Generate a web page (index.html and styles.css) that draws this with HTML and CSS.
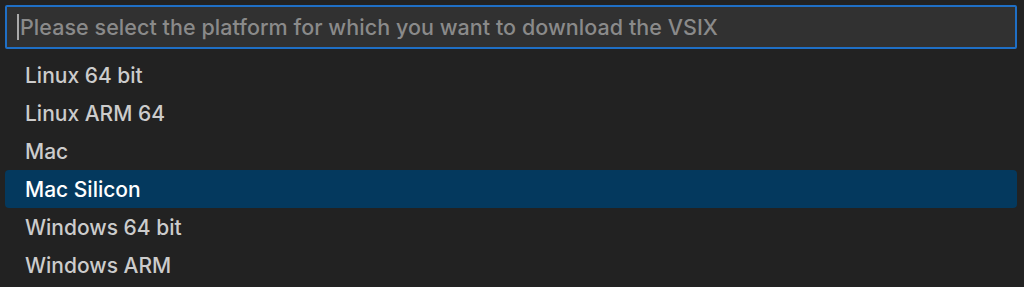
FILE: index.html
```html
<!DOCTYPE html>
<html>
<head>
<meta charset="utf-8">
<link rel="stylesheet" href="styles.css">
</head>
<body>
<div class="quick-pick">
  <div class="input-box">
    <span class="cursor"></span>
    <span class="placeholder">Please select the platform for which you want to download the VSIX</span>
  </div>
  <ul class="list">
    <li class="item">Linux 64 bit</li>
    <li class="item">Linux ARM 64</li>
    <li class="item">Mac</li>
    <li class="item selected">Mac Silicon</li>
    <li class="item">Windows 64 bit</li>
    <li class="item">Windows ARM</li>
  </ul>
</div>
</body>
</html>
```

FILE: styles.css
```css
html, body {
  margin: 0;
  padding: 0;
  background: #222222;
  height: 100%;
}
body {
  font-family: Inter, "Noto Sans", sans-serif;
  color: #cccccc;
  overflow: hidden;
}
.quick-pick {
  padding: 5px 7px 0 5px;
}
.input-box {
  height: 40px;
  border: 2px solid #1f6fc5;
  border-radius: 2px;
  background: #313131;
  display: flex;
  align-items: center;
  padding-left: 10px;
}
.cursor {
  width: 2px;
  height: 26px;
  background: #aaaaaa;
  margin-right: 1px;
}
.placeholder {
  color: #8a8a8a;
  font-size: 21.5px;
  font-weight: 500;
  letter-spacing: 0.05px;
  white-space: nowrap;
}
.list {
  list-style: none;
  margin: 7px 0 0 0;
  padding: 0;
}
.item {
  height: 37px;
  padding-top: 1px;
  line-height: 38px;
  padding-left: 20px;
  font-size: 21px;
  font-weight: 500;
  color: #cccccc;
  border-radius: 4px;
}
.item.selected {
  background: #04395e;
  color: #ffffff;
}
```
